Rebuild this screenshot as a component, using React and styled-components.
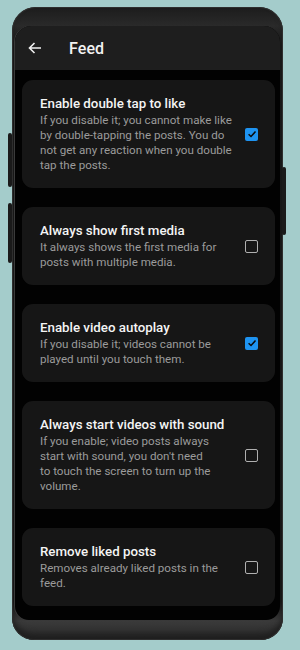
import React, { useState } from "react";
import styled, { createGlobalStyle } from "styled-components";

const Global = createGlobalStyle`
  html, body { margin: 0; padding: 0; }
  body {
    background: #a4cccb;
    font-family: Roboto, "Noto Sans", "Liberation Sans", sans-serif;
    width: 300px;
    height: 650px;
    overflow: hidden;
  }
`;

const Stage = styled.div`
  padding: 7px 0 0 12px;
`;

const Phone = styled.div`
  position: relative;
  width: 271px;
  height: 633px;
  box-sizing: border-box;
  border-radius: 24px 24px 22px 22px;
  background: linear-gradient(180deg, #1c1c1c 0%, #2a2a2a 3%, #161616 6%, #141414 94%, #3a3a3a 97%, #2a2a2a 100%);
  padding: 19px 3px 20px 3px;
  box-shadow: inset 0 0 0 1px #2e2e2e, inset 0 -6px 6px #1e1e1e;
`;

const SideButton = styled.div`
  position: absolute;
  width: 4px;
  background: #1a1a1a;
  border-radius: 2px;
  ${(p) => (p.$side === "left" ? "left: -4px;" : "right: -3px;")}
  top: ${(p) => p.$top}px;
  height: ${(p) => p.$h}px;
`;

const Screen = styled.div`
  height: 100%;
  border-radius: 16px 16px 14px 14px;
  background: #020202;
  overflow: hidden;
  display: flex;
  flex-direction: column;
  box-shadow: -1px 0 0 #3a3a3a;
`;

const Header = styled.div`
  height: 44px;
  flex: none;
  background: #1e1e1e;
  display: flex;
  align-items: center;
  padding-left: 12px;
  gap: 26px;
`;

const Back = styled.div`
  width: 16px;
  height: 16px;
  display: flex;
  align-items: center;
  justify-content: center;
`;

const Title = styled.div`
  color: #f2f2f2;
  font-size: 16px;
  font-weight: 500;
  letter-spacing: 0.1px;
`;

const List = styled.div`
  display: flex;
  flex-direction: column;
  gap: 19px;
  padding: 10px 5px 0 7px;
`;

const Card = styled.div`
  background: #161616;
  border-radius: 11px;
  padding: 15px 16px 15px 18px;
  display: flex;
  align-items: center;
  gap: 8px;
`;

const Texts = styled.div`
  flex: 1;
  min-width: 0;
`;

const ItemTitle = styled.div`
  color: #f4f4f4;
  font-size: 13.3px;
  font-weight: 500;
  line-height: 18px;
`;

const ItemDesc = styled.div`
  color: #9b9b9b;
  font-size: 11.6px;
  line-height: 15px;
  max-width: 200px;
  white-space: pre-line;
`;

const Box = styled.div`
  flex: none;
  width: 13px;
  height: 13px;
  box-sizing: border-box;
  border-radius: 2px;
  border: ${(p) => (p.$on ? "none" : "1.6px solid #b0b0b0")};
  background: ${(p) => (p.$on ? "#1e93f0" : "transparent")};
  display: flex;
  align-items: center;
  justify-content: center;
  margin-right: 1px;
`;

const items = [
  {
    t: "Enable double tap to like",
    d: "If you disable it; you cannot make like by double-tapping the posts. You do not get any reaction when you double tap the posts.",
    on: true,
  },
  {
    t: "Always show first media",
    d: "It always shows the first media for posts with multiple media.",
    on: false,
  },
  {
    t: "Enable video autoplay",
    d: "If you disable it; videos cannot be played until you touch them.",
    on: true,
  },
  {
    t: "Always start videos with sound",
    d: "If you enable; video posts always\nstart with sound, you don't need\nto touch the screen to turn up the\nvolume.",
    on: false,
  },
  {
    t: "Remove liked posts",
    d: "Removes already liked posts in the feed.",
    on: false,
  },
];

function Check({ on }) {
  return (
    <Box $on={on}>
      {on && (
        <svg width="10" height="10" viewBox="0 0 10 10">
          <path d="M1.6 5.2 L4 7.5 L8.5 2.6" fill="none" stroke="#0a0a0a" strokeWidth="1.5" />
        </svg>
      )}
    </Box>
  );
}

export default function App() {
  const [state, setState] = useState(items.map((i) => i.on));
  return (
    <>
      <Global />
      <Stage>
        <Phone>
          <SideButton $side="left" $top={126} $h={54} />
          <SideButton $side="left" $top={196} $h={60} />
          <SideButton $side="right" $top={160} $h={68} />
          <Screen>
            <Header>
              <Back>
                <svg width="14" height="12" viewBox="0 0 14 12">
                  <path d="M13 6 H1.5 M6.5 1 L1.5 6 L6.5 11" fill="none" stroke="#f0f0f0" strokeWidth="1.6" />
                </svg>
              </Back>
              <Title>Feed</Title>
            </Header>
            <List>
              {items.map((it, i) => (
                <Card
                  key={it.t}
                  onClick={() => setState((s) => s.map((v, j) => (j === i ? !v : v)))}
                >
                  <Texts>
                    <ItemTitle>{it.t}</ItemTitle>
                    <ItemDesc>{it.d}</ItemDesc>
                  </Texts>
                  <Check on={state[i]} />
                </Card>
              ))}
            </List>
          </Screen>
        </Phone>
      </Stage>
    </>
  );
}
